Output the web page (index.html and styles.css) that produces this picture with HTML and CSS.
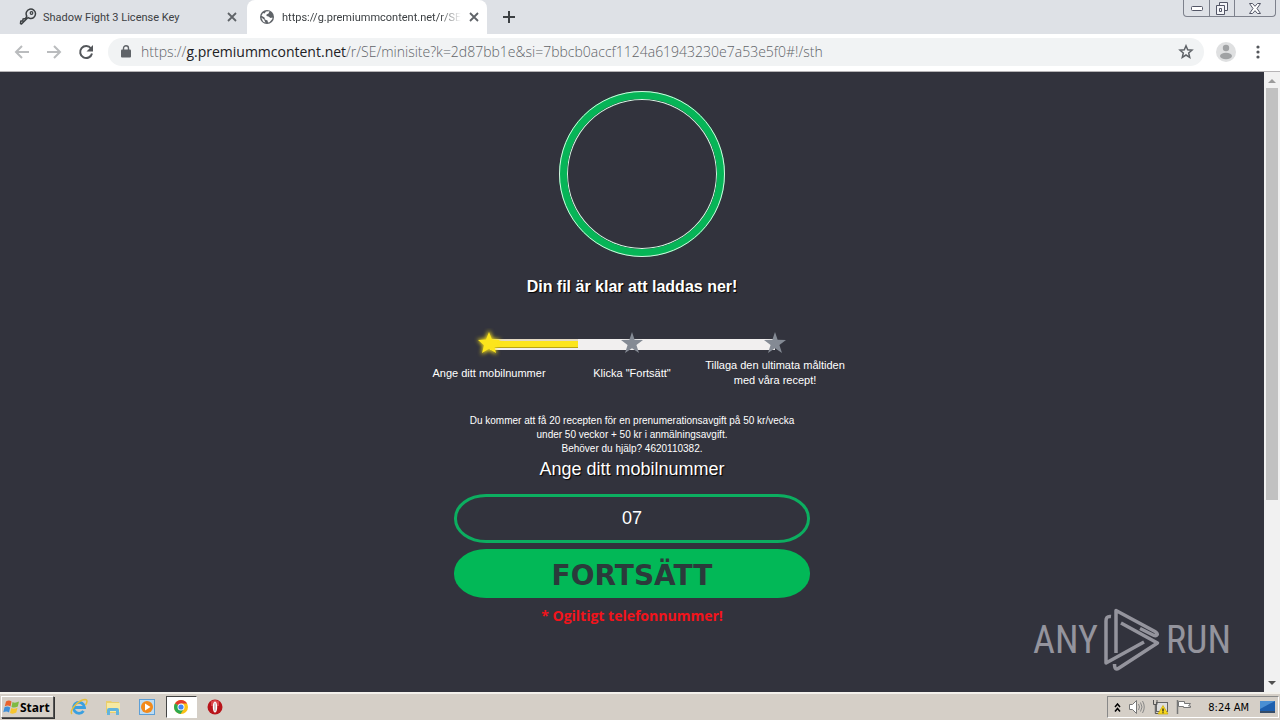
FILE: index.html
```html
<!DOCTYPE html>
<html lang="sv">
<head>
    <meta charset="UTF-8">
    <title>Minisite</title>
    <link rel="stylesheet" href="styles.css">
</head>
<body>
    <header class="browser">
        <div class="tab-strip">
            <div class="tab">
                <svg class="tab-icon" width="18" height="18" viewBox="0 0 18 18" fill="none" stroke="#3c4043" stroke-width="1.5" stroke-linejoin="round">
                    <path d="M9 9.500L2.500 16L1.500 15.500L1.800 13L3.800 13L4 11L6.500 10.500L7.800 8.200A4.700 4.700 0 1 1 10.500 10.300L9 9.500"/>
                    <circle cx="12.500" cy="5" r="1.300" stroke-width="1.200"/>
                </svg>
                <a class="tab-title" href="#">Shadow Fight 3 License Key</a>
                <button class="tab-close" aria-label="Close tab"><svg width="10" height="10" viewBox="0 0 10 10" stroke="#5f6368" stroke-width="1.800"><path d="M1 1l8 8M9 1l-8 8"/></svg></button>
            </div>
            <div class="tab tab-active">
                <svg class="tab-icon globe" width="14" height="14" viewBox="0 0 14 14">
                    <circle cx="7" cy="7" r="7" fill="#5f6368"/>
                    <path d="M6 1.500L9.500 1.300L8.500 3.500L6.500 4.500L6.500 6L8.500 6.500L10.500 8L12.500 7.500L12.300 9L9.500 12.300L8 12.500L7.500 10.500L5 9.500L4.500 7.500L1.500 5.800L3 3L4.500 3.500Z" fill="#fff"/>
                    <path d="M1.300 7.500L4 9.500L5.500 12.700L3 11.500Z" fill="#fff"/>
                </svg>
                <a class="tab-title tab-fade" href="#">https://g.premiummcontent.net/r/SE</a>
                <button class="tab-close" aria-label="Close tab"><svg width="10" height="10" viewBox="0 0 10 10" stroke="#5f6368" stroke-width="1.800"><path d="M1 1l8 8M9 1l-8 8"/></svg></button>
            </div>
            <button class="new-tab" aria-label="New tab"><svg width="12" height="12" viewBox="0 0 12 12" stroke="#3c4043" stroke-width="2"><path d="M6 0v12M0 6h12"/></svg></button>
            <div class="window-buttons">
                <button aria-label="Minimize"><svg width="12" height="5" viewBox="0 0 12 5"><rect x=".5" y=".5" width="11" height="4" rx="1" fill="#fff" stroke="#535666"/></svg></button>
                <button aria-label="Restore"><svg width="14" height="13" viewBox="0 0 14 13" fill="#f4f5f8" stroke="#535666"><path d="M4.500 .5h8v8h-8z"/><path d="M1.500 3.500h8v9h-8z"/><path d="M4.500 6.500h2v3h-2z"/></svg></button>
                <button class="wide" aria-label="Close"><svg width="12" height="11" viewBox="0 0 12 11" fill="#fff" stroke="#535666"><path d="M.5 .5h3L6 3.300L8.500 .5h3L8 5.500l3.500 5h-3L6 7.700L3.500 10.500h-3L4 5.500z"/></svg></button>
            </div>
        </div>
        <div class="toolbar">
            <button class="nav" aria-label="Back"><svg width="16" height="14" viewBox="0 0 16 14" fill="none" stroke="#babcbe" stroke-width="2"><path d="M15 7H2M8 1L2 7l6 6"/></svg></button>
            <button class="nav" aria-label="Forward"><svg width="16" height="14" viewBox="0 0 16 14" fill="none" stroke="#babcbe" stroke-width="2"><path d="M1 7h13M8 1l6 6-6 6"/></svg></button>
            <button class="nav" aria-label="Reload"><svg width="16" height="16" viewBox="0 0 16 16"><path d="M13 4.500A6 6 0 1 0 14 9.500" fill="none" stroke="#54575b" stroke-width="2"/><path d="M15 1v6.500H8.500z" fill="#54575b"/></svg></button>
            <div class="omnibox">
                <svg width="10" height="13" viewBox="0 0 10 13"><path d="M2.500 5V3.200a2.500 2.500 0 0 1 5 0V5" fill="none" stroke="#5f6368" stroke-width="1.400"/><rect x="0" y="4.500" width="10" height="8" rx="1" fill="#5f6368"/></svg>
                <a class="url" href="#">https://<span class="host">g.premiummcontent.net</span>/r/SE/minisite?k=2d87bb1e&amp;si=7bbcb0accf1124a61943230e7a53e5f0#!/sth</a>
                <button aria-label="Bookmark"><svg width="16" height="15" viewBox="0 0 16 15" fill="none" stroke="#5f6368" stroke-width="1.500"><path d="M8 1.800L9.700 5.800L14 6.200L10.700 9L11.700 13.300L8 11L4.300 13.300L5.300 9L2 6.200L6.300 5.800Z"/></svg></button>
            </div>
            <button class="profile" aria-label="Profile"><svg width="20" height="20" viewBox="0 0 20 20"><circle cx="10" cy="10" r="10" fill="#dfe0e1"/><circle cx="10" cy="6" r="3.200" fill="#a0a2a4"/><ellipse cx="10" cy="14" rx="6" ry="3.200" fill="#a0a2a4"/></svg></button>
            <button class="menu" aria-label="Menu"><svg width="4" height="14" viewBox="0 0 4 14" fill="#54575b"><circle cx="2" cy="2" r="1.600"/><circle cx="2" cy="7" r="1.600"/><circle cx="2" cy="12" r="1.600"/></svg></button>
        </div>
    </header>

    <div class="viewport">
        <main class="page">
            <div class="ring"></div>
            <h1 class="title">Din fil är klar att laddas ner!</h1>

            <div class="steps">
                <div class="track"><div class="track-fill"></div></div>
                <div class="step">
                    <svg class="star" width="30" height="30" viewBox="0 0 30 30"><path class="glow" d="M15 2L18.600 10.700L27 11.500L20.800 17.500L22.700 26.500L15 22L7.300 26.500L9.200 17.500L3 11.500L11.400 10.700Z"/><path d="M15 4L18 11.500L26 12L20 17.300L22 25L15 20.800L8 25L10 17.300L4 12L12 11.500Z" fill="#fce51c"/></svg>
                    <p>Ange ditt mobilnummer</p>
                </div>
                <div class="step">
                    <svg class="star" width="30" height="30" viewBox="0 0 30 30"><path d="M15 4L17.600 11.800L26 12L19.400 17L22 25L15 20.300L8 25L10.600 17L4 12L12.400 11.800Z" fill="#848a94"/></svg>
                    <p>Klicka "Fortsätt"</p>
                </div>
                <div class="step">
                    <svg class="star" width="30" height="30" viewBox="0 0 30 30"><path d="M15 4L17.600 11.800L26 12L19.400 17L22 25L15 20.300L8 25L10.600 17L4 12L12.400 11.800Z" fill="#848a94"/></svg>
                    <p>Tillaga den ultimata måltiden med våra recept!</p>
                </div>
            </div>

            <p class="terms">Du kommer att få 20 recepten för en prenumerationsavgift på 50 kr/vecka<br>under 50 veckor + 50 kr i anmälningsavgift.<br>Behöver du hjälp? 4620110382.</p>

            <form class="phone-form">
                <label for="phone">Ange ditt mobilnummer</label>
                <input type="text" id="phone" value="07">
                <button type="button">FORTSÄTT</button>
                <p class="error">* Ogiltigt telefonnummer!</p>
            </form>
        </main>

        <div class="watermark">
            <span>ANY</span>
            <svg width="56" height="64" viewBox="0 0 56 64" fill="none" stroke="#94949d" stroke-width="3.500" stroke-linejoin="round">
                <path d="M7 8.500C3 8 2 10 2 13V55L40 34"/>
                <path d="M12 45V2.500L51 23.500C55 26 53 29 49 27L36 20.500"/>
                <path d="M17 15L53.500 35L15 60C12 62 10.500 61 10.500 56"/>
            </svg>
            <span>RUN</span>
        </div>

        <div class="scrollbar">
            <svg width="8" height="4" viewBox="0 0 8 4"><path d="M4 0l4 4H0z" fill="#9b9b9b"/></svg>
            <div class="rail"><div class="thumb"></div></div>
            <svg width="8" height="4" viewBox="0 0 8 4"><path d="M4 4l4-4H0z" fill="#505050"/></svg>
        </div>
    </div>

    <footer class="taskbar">
        <button class="start">
            <svg width="17" height="16" viewBox="0 0 17 16"><path d="M3 2.500Q6 .5 8.500 2.500L7.500 7.500Q5 5.500 1.800 7.200Z" fill="#e8622c"/><path d="M9.500 3Q12 4.500 16 2.500L14.800 7.500Q11.500 9.300 8.500 8Z" fill="#7fba42"/><path d="M1.500 8.300Q4.500 6.800 7.200 8.600L6 13.500Q3.500 11.500 .3 13.300Z" fill="#3f8fd8"/><path d="M8.300 9Q11 10.500 14.500 8.700L13.300 13.500Q10 15.500 7 14Z" fill="#f7c52d"/></svg>
            <span>Start</span>
        </button>
        <div class="launch">
            <a href="#" aria-label="Internet Explorer"><svg width="18" height="18" viewBox="0 0 18 18" fill="none"><path d="M4 9.500H14.500A5.500 5.500 0 1 0 13.500 13" stroke="#3aa0e0" stroke-width="2.800"/><path d="M2 16C-1 13 8 2 15 1.500C18 1.500 17 5 15.500 7" stroke="#e6bf3c" stroke-width="1.500"/></svg></a>
            <a href="#" aria-label="Explorer"><svg width="18" height="18" viewBox="0 0 18 18"><path d="M2 3h5l1 1h7v11H2z" fill="#e9ce6c"/><path d="M3 5h13v9H3z" fill="#f7e9a2"/><path d="M3 17v-5q0-2 2-2h8q2 0 2 2v5h-3v-4H6v4z" fill="#63b4dc"/></svg></a>
            <a href="#" aria-label="Media Player"><svg width="18" height="18" viewBox="0 0 18 18"><rect x="1.500" y="1.500" width="15" height="15" fill="#bcdcf4" stroke="#5d9fd6"/><circle cx="9" cy="9" r="6" fill="#f28a1c"/><path d="M7 5.500l5.500 3.500L7 12.500z" fill="#fff"/></svg></a>
            <a class="running" href="#" aria-label="Chrome"><svg width="14" height="14" viewBox="0 0 14 14"><circle cx="7" cy="7" r="7" fill="#fbc116"/><path d="M7 7L1 3.500A7 7 0 0 1 13.100 3.500H7z" fill="#e33b2e"/><path d="M7 7L1 3.500A7 7 0 0 0 6.500 14L10 8.700z" fill="#2da94f"/><circle cx="7" cy="7" r="3.500" fill="#fff"/><circle cx="7" cy="7" r="2.600" fill="#4285f4"/></svg></a>
            <a href="#" aria-label="Opera"><svg width="16" height="16" viewBox="0 0 16 16"><circle cx="8" cy="8" r="7.500" fill="#b8141a"/><path d="M4 2.500Q8-.5 12 2.500V7H4z" fill="#d9474a"/><ellipse cx="8" cy="8" rx="2.200" ry="5.500" fill="#fff"/><ellipse cx="8" cy="8" rx=".8" ry="4.500" fill="#c9b5b5"/></svg></a>
        </div>
        <div class="tray">
            <svg width="7" height="9" viewBox="0 0 7 9" fill="none" stroke="#000" stroke-width="1.500"><path d="M1 4l2.500-3L6 4M1 8.500l2.500-3L6 8.500"/></svg>
            <svg width="17" height="16" viewBox="0 0 17 16"><path d="M1.500 5.500h3l4-4v13l-4-4h-3z" fill="#fff" stroke="#777"/><path d="M10.500 5q2 3 0 6M12.500 3.500q3 4.500 0 9M14.500 2q3.500 6 0 12" fill="none" stroke="#888"/></svg>
            <svg width="17" height="16" viewBox="0 0 17 16"><rect x="4.500" y="3.500" width="11" height="9" fill="#dedede" stroke="#666"/><path d="M1.500 1v4.500h3.500V1M3.300 6v8.500h3" fill="none" stroke="#555"/><path d="M11 6.500l5 8.500H6z" fill="#f8d81c" stroke="#c9a800" stroke-width=".7"/><path d="M11 9.500v3M11 13.200v1" stroke="#222" stroke-width="1.300"/></svg>
            <svg width="17" height="16" viewBox="0 0 17 16"><path d="M1.500 1v14" stroke="#777" stroke-width="1.500"/><path d="M2.500 2.500h6v2h6l-2 2.500 2 0v1.500H7.500v-1h-5z" fill="#fff" stroke="#777"/></svg>
            <time>8:24 AM</time>
            <svg width="17" height="14" viewBox="0 0 17 14"><path d="M1 1h15v10H1z" fill="#1d5fae"/><path d="M1 1h15L1 9z" fill="#4a8fd3"/><path d="M1 11h15v2H1z" fill="#354c68"/></svg>
        </div>
    </footer>
</body>
</html>
```
FILE: styles.css
```css
* {
    box-sizing: border-box;
}
body {
    margin: 0;
    height: 100vh;
    display: flex;
    flex-direction: column;
    overflow: hidden;
    font-family: "Liberation Sans", Arial, sans-serif;
    background-color: #32333d;
}
button {
    padding: 0;
    border: none;
    background: none;
}
svg {
    display: block;
    flex-shrink: 0;
}
a {
    color: inherit;
    text-decoration: none;
}

/* Browser window */
.browser {
    border-bottom: 1px solid #b6b4b6;
    background-color: #fff;
}
.tab-strip {
    display: flex;
    height: 34px;
    background-color: #dee1e6;
}
.tab {
    display: flex;
    align-items: center;
    gap: 6px;
    width: 247px;
    padding: 0 10px 0 19px;
    font-family: Roboto, sans-serif;
    font-size: 11px;
    color: #3c4043;
}
.tab-active {
    width: 240px;
    gap: 8px;
    padding: 0 11px 0 13px;
    background-color: #fff;
    border-radius: 8px 8px 0 0;
}
.tab-title {
    flex: 1;
    white-space: nowrap;
}
.tab-fade {
    mask-image: linear-gradient(to right, #000 88%, transparent);
}
.new-tab {
    padding: 0 16px;
}
.window-buttons {
    display: flex;
    height: 17px;
    margin-left: auto;
    margin-right: 4px;
    border: 1px solid #7d818c;
    border-top: none;
    border-radius: 0 0 4px 4px;
}
.window-buttons button {
    display: flex;
    align-items: center;
    justify-content: center;
    width: 25px;
}
.window-buttons button + button {
    border-left: 1px solid #7d818c;
}
.window-buttons .wide {
    width: 41px;
}
.toolbar {
    display: flex;
    align-items: center;
    height: 37px;
    padding: 0 20px 2px 14px;
}
.nav {
    width: 32px;
}
.omnibox {
    flex: 1;
    display: flex;
    align-items: center;
    gap: 10px;
    height: 28px;
    margin-left: -2px;
    padding: 0 10px 0 13px;
    border-radius: 14px;
    background-color: #f1f3f4;
}
.url {
    flex: 1;
    font-family: "Open Sans", sans-serif;
    font-weight: 300;
    font-size: 14px;
    color: #5f6368;
}
.host {
    font-weight: 400;
    color: #202124;
}
.profile {
    margin: 0 20px 0 12px;
}

/* Page */
.viewport {
    position: relative;
    flex: 1;
    display: flex;
    min-height: 0;
}
.page {
    flex: 1;
    display: flex;
    flex-direction: column;
    align-items: center;
    padding-top: 19px;
    color: #fff;
    text-align: center;
}
.ring {
    width: 166px;
    height: 166px;
    margin-left: 20px;
    border: 8px solid #06b557;
    border-radius: 50%;
    outline: 1px solid #d5f5e2;
    outline-offset: -1px;
    box-shadow: inset 0 0 0 1px #d5f5e2;
}
.title {
    margin: 21px 0 32px;
    font-size: 16px;
    font-weight: 700;
    line-height: 18px;
    text-shadow: 1px 1px 1px #000;
}
.steps {
    position: relative;
    display: grid;
    grid-template-columns: repeat(3, 143px);
    font-size: 11px;
    line-height: 15px;
}
.track {
    position: absolute;
    top: 11px;
    left: 72px;
    right: 72px;
    height: 11px;
    background-color: #f1efef;
}
.track-fill {
    width: 31%;
    height: 9px;
    border-top: 2px solid #e2d8c2;
    border-bottom: 1px solid #b9a413;
    background-color: #fce51c;
}
.step {
    position: relative;
    display: grid;
    grid-template-rows: 30px 30px;
    align-items: center;
    justify-items: center;
}
.step p {
    margin: 0;
}
.glow {
    fill: #fce51c;
    filter: blur(2px);
}
.terms {
    margin: 26px 0 2px;
    font-size: 10px;
    line-height: 14px;
}
.phone-form {
    display: flex;
    flex-direction: column;
    width: 356px;
}
.phone-form label {
    margin-bottom: 14px;
    font-size: 18px;
    line-height: 22px;
    text-shadow: 1px 1px 1px #000;
}
.phone-form input {
    height: 49px;
    margin-bottom: 6px;
    padding: 0;
    border: 3px solid #0cae60;
    border-radius: 32px / 24px;
    background: none;
    color: #fff;
    font: 18px "Liberation Sans", Arial, sans-serif;
    text-align: center;
}
.phone-form button {
    height: 49px;
    padding-top: 4px;
    border-radius: 32px / 24px;
    background-color: #02b857;
    color: #2b3a3b;
    font: bold 28px "DejaVu Sans", sans-serif;
}
.error {
    margin: 8px 0 0;
    font: bold 14px/20px "Open Sans", sans-serif;
    color: #f2131b;
}
.watermark {
    position: absolute;
    right: 49px;
    bottom: 20px;
    display: flex;
    align-items: center;
    gap: 6px;
    color: #94949d;
    font-family: "Roboto Condensed", "Liberation Sans Narrow", sans-serif;
    font-size: 38px;
}
.scrollbar {
    display: flex;
    flex-direction: column;
    align-items: center;
    gap: 5px;
    width: 16px;
    padding: 7px 0;
    background-color: #f1f1f1;
}
.rail {
    flex: 1;
}
.thumb {
    width: 12px;
    height: 70%;
    background-color: #c1c1c1;
}

/* Taskbar */
.taskbar {
    display: flex;
    align-items: center;
    height: 28px;
    padding: 0 1px;
    border-top: 2px solid #f3f1ec;
    background-color: #d5cfc7;
    color: #000;
}
.start {
    display: flex;
    align-items: center;
    height: 22px;
    padding: 0 3px 0 1px;
    border: 1px solid;
    border-color: #fff #555 #555 #fff;
    box-shadow: 1px 1px 0 #333;
    font: bold 12px "Open Sans", sans-serif;
}
.launch {
    display: flex;
    align-items: center;
    margin-left: 8px;
}
.launch a {
    display: flex;
    align-items: center;
    justify-content: center;
    width: 34px;
    height: 22px;
}
.launch .running {
    width: 31px;
    margin: 0 1px 0 2px;
    border: 1px solid;
    border-color: #444 #fff #fff #444;
    background-color: #fff;
}
.tray {
    display: flex;
    align-items: center;
    gap: 7px;
    height: 22px;
    margin-left: auto;
    padding: 0 2px 0 6px;
    border: 1px solid;
    border-color: #888 #fff #fff #888;
}
.tray time {
    margin: 0 3px 0 8px;
    font: 11px "DejaVu Sans Condensed", "Noto Sans", sans-serif;
}
```
